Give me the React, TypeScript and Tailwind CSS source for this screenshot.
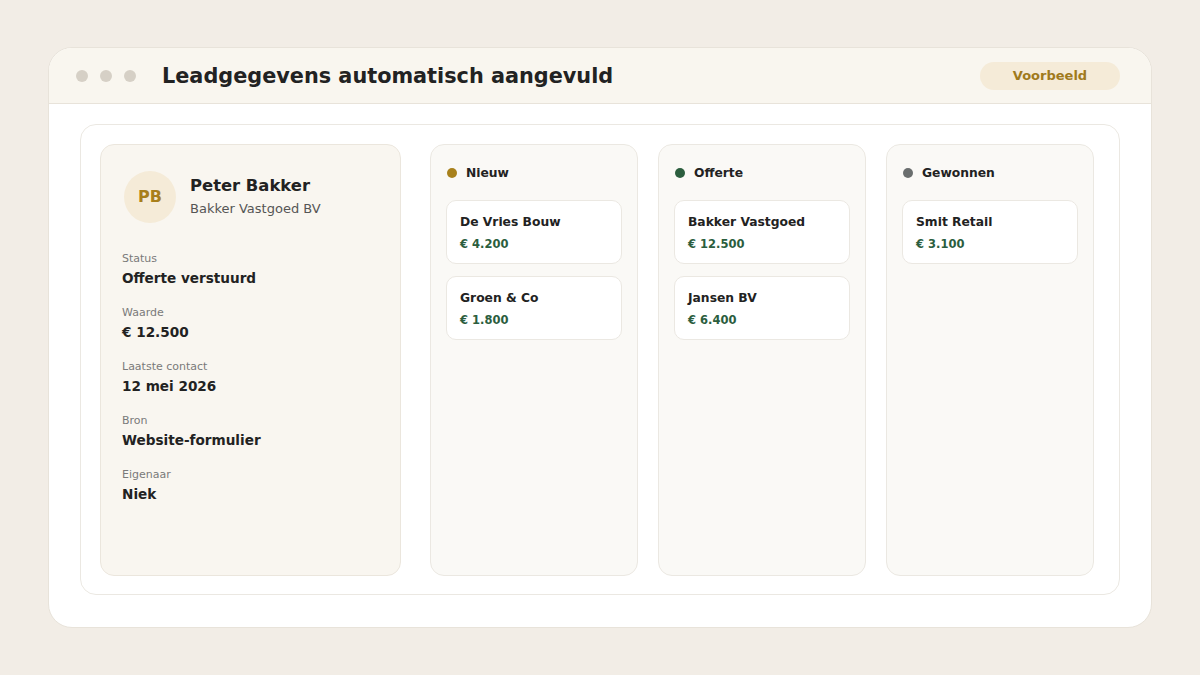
import React from 'react';

const fields = [
  { label: 'Status', value: 'Offerte verstuurd' },
  { label: 'Waarde', value: '€ 12.500' },
  { label: 'Laatste contact', value: '12 mei 2026' },
  { label: 'Bron', value: 'Website-formulier' },
  { label: 'Eigenaar', value: 'Niek' },
];

const columns = [
  {
    title: 'Nieuw',
    dot: 'bg-[#a8811c]',
    deals: [
      { name: 'De Vries Bouw', amount: '€ 4.200' },
      { name: 'Groen & Co', amount: '€ 1.800' },
    ],
  },
  {
    title: 'Offerte',
    dot: 'bg-[#2b5e3e]',
    deals: [
      { name: 'Bakker Vastgoed', amount: '€ 12.500' },
      { name: 'Jansen BV', amount: '€ 6.400' },
    ],
  },
  {
    title: 'Gewonnen',
    dot: 'bg-[#6a6e6e]',
    deals: [{ name: 'Smit Retail', amount: '€ 3.100' }],
  },
];

const App = () => {
  return (
    <div className="h-[675px] bg-[#f2ede6] flex justify-center pt-[47px] [font-family:'DejaVu_Sans',sans-serif] text-[#222222]">
      <div className="w-[1104px] h-[581px] bg-white rounded-[24px] border border-[#e8e3da] overflow-hidden flex flex-col">
        {/* Header */}
        <div className="h-[56px] shrink-0 bg-[#f9f6ef] border-b border-[#e8e3da] flex items-center pl-[27px] pr-[31px]">
          <div className="flex gap-3">
            <span className="w-3 h-3 rounded-full bg-[#d6d0c6]" />
            <span className="w-3 h-3 rounded-full bg-[#d6d0c6]" />
            <span className="w-3 h-3 rounded-full bg-[#d6d0c6]" />
          </div>
          <h1 className="ml-[26px] text-[20.8px] font-bold leading-7 pt-[1px]">Leadgegevens automatisch aangevuld</h1>
          <span className="ml-auto w-[140px] h-[28px] rounded-full bg-[#f5ebd8] text-[#a07a1c] text-[13px] font-bold flex items-center justify-center">
            Voorbeeld
          </span>
        </div>

        {/* Body */}
        <div className="flex-1 px-[31px] pt-[20px]">
          <div className="h-[471px] rounded-[16px] border border-[#ebe8e2] px-[19px] pt-[19px] pb-[18px] flex">
            {/* Lead card */}
            <div className="w-[301px] shrink-0 rounded-[14px] border border-[#ebe6dd] bg-[#f9f6f0] px-[21px] pt-[26px]">
              <div className="flex items-center gap-[14px] pl-[2px]">
                <div className="w-[52px] h-[52px] rounded-full bg-[#f5ebd8] flex items-center justify-center text-[16px] font-bold text-[#a87f1c]">
                  PB
                </div>
                <div>
                  <div className="text-[16.4px] font-bold leading-5">Peter Bakker</div>
                  <div className="text-[13px] text-[#555555] mt-[3px]">Bakker Vastgoed BV</div>
                </div>
              </div>
              <div className="mt-[28px] flex flex-col gap-[17px]">
                {fields.map((f) => (
                  <div key={f.label}>
                    <div className="text-[11px] text-[#7a7a7a] leading-4">{f.label}</div>
                    <div className="text-[13.6px] font-bold leading-[19px] mt-[2px]">{f.value}</div>
                  </div>
                ))}
              </div>
            </div>

            {/* Pipeline columns */}
            <div className="ml-[29px] flex gap-5">
              {columns.map((c) => (
                <div
                  key={c.title}
                  className="w-[208px] rounded-[14px] border border-[#ebe8e2] bg-[#faf9f6] px-[15px] pt-[20px]"
                >
                  <div className="flex items-center gap-[9px] pl-[1px] h-[16px]">
                    <span className={`w-[10px] h-[10px] rounded-full ${c.dot}`} />
                    <span className="text-[12.3px] font-bold">{c.title}</span>
                  </div>
                  <div className="mt-[19px] flex flex-col gap-3">
                    {c.deals.map((d) => (
                      <div
                        key={d.name}
                        className="h-[64px] rounded-[10px] border border-[#ebe8e2] bg-white px-[13px] pt-[13px]"
                      >
                        <div className="text-[12.3px] font-bold leading-4">{d.name}</div>
                        <div className="text-[11.5px] font-bold text-[#2b5e3e] mt-[6px] leading-4">{d.amount}</div>
                      </div>
                    ))}
                  </div>
                </div>
              ))}
            </div>
          </div>
        </div>
      </div>
    </div>
  );
};

export default App;
